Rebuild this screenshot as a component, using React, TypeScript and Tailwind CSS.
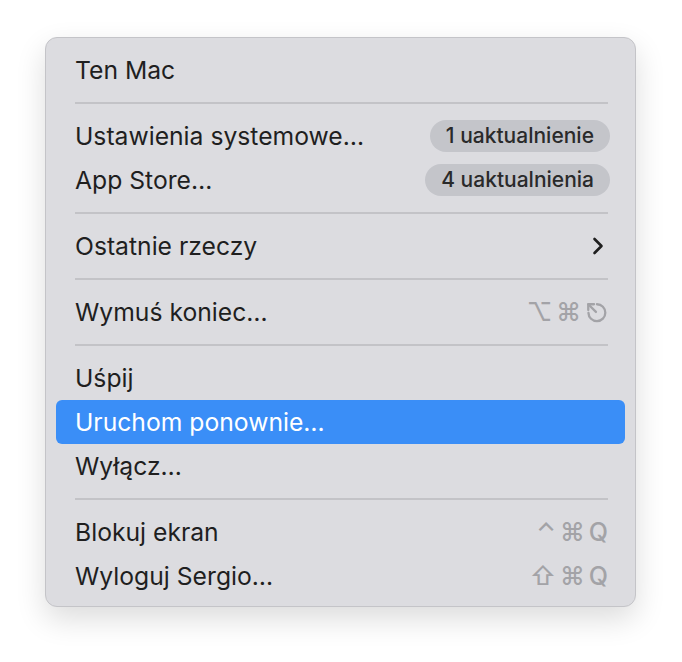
import React from 'react';

type Item =
  | { kind: 'sep' }
  | {
      kind: 'item';
      label: string;
      badge?: string;
      shortcut?: React.ReactNode;
      submenu?: boolean;
      active?: boolean;
    };

function EscIcon() {
  return (
    <svg width="23" height="23" viewBox="0 0 24 24" fill="none" stroke="currentColor" strokeWidth="2.4" strokeLinecap="round" strokeLinejoin="round">
      <path d="M12.5 3.4 A8.8 8.8 0 1 1 3.6 12.4" />
      <path d="M3.4 3.4 L11.4 11.4" />
      <path d="M3.4 9.4 V3.4 H9.4" />
    </svg>
  );
}

function Keys({ keys }: { keys: React.ReactNode[] }) {
  return (
    <div className="flex items-center gap-[4px] text-[#a3a3a7] text-[25px] font-medium leading-none">
      {keys.map((k, i) => (
        <span key={i} className="flex items-center">
          {k}
        </span>
      ))}
    </div>
  );
}

const items: Item[] = [
  { kind: 'item', label: 'Ten Mac' },
  { kind: 'sep' },
  { kind: 'item', label: 'Ustawienia systemowe…', badge: '1 uaktualnienie' },
  { kind: 'item', label: 'App Store…', badge: '4 uaktualnienia' },
  { kind: 'sep' },
  { kind: 'item', label: 'Ostatnie rzeczy', submenu: true },
  { kind: 'sep' },
  {
    kind: 'item',
    label: 'Wymuś koniec…',
    shortcut: <Keys keys={['⌥', '⌘', <EscIcon key="esc" />]} />,
  },
  { kind: 'sep' },
  { kind: 'item', label: 'Uśpij' },
  { kind: 'item', label: 'Uruchom ponownie…', active: true },
  { kind: 'item', label: 'Wyłącz…' },
  { kind: 'sep' },
  { kind: 'item', label: 'Blokuj ekran', shortcut: <Keys keys={['⌃', '⌘', 'Q']} /> },
  { kind: 'item', label: 'Wyloguj Sergio…', shortcut: <Keys keys={['⇧', '⌘', 'Q']} /> },
];

export default function App() {
  return (
    <div
      className="min-h-screen bg-white pt-[37px] pl-[45px]"
      style={{ fontFamily: 'Inter, "Noto Sans", sans-serif' }}
    >
      <div className="w-[591px] rounded-[12px] border border-[#c4c4c8] bg-[#dcdce0] px-[10px] pt-[10px] pb-[8px] shadow-[0_12px_30px_rgba(0,0,0,0.14)]">
        {items.map((it, i) =>
          it.kind === 'sep' ? (
            <div key={i} className="h-[22px] pt-[10px] px-[19px]">
              <div className="h-[2px] bg-[#c3c3c7] mr-[-2px]" />
            </div>
          ) : (
            <div
              key={i}
              className={`flex h-[44px] items-center justify-between rounded-[6px] pl-[19px] pr-[17px] text-[24.7px] ${
                it.active ? 'bg-[#3a8ef7] text-white' : 'text-[#1f1f1f]'
              }`}
            >
              <span className="pt-[2px]">{it.label}</span>
              {it.badge && (
                <span className="-mr-[2px] flex h-[32px] items-center rounded-full bg-[#c4c5ca] px-[16px] text-[21px] font-medium text-[#2a2a2a]">
                  {it.badge}
                </span>
              )}
              {it.submenu && (
                <svg width="12" height="18" viewBox="0 0 12 18" fill="none" stroke="#1f1f1f" strokeWidth="2.6" strokeLinecap="round" strokeLinejoin="round" className="mr-[4px]">
                  <path d="M2.5 2 L9.5 9 L2.5 16" />
                </svg>
              )}
              {it.shortcut}
            </div>
          )
        )}
      </div>
    </div>
  );
}
